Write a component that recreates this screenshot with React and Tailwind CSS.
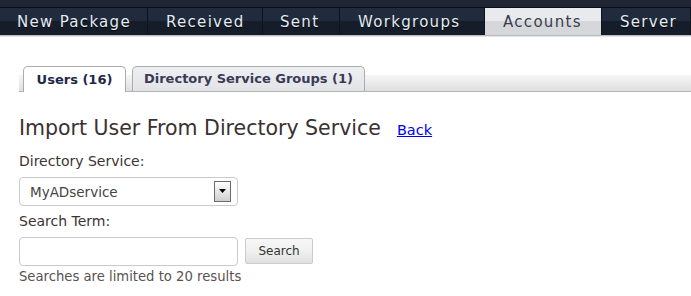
import React from "react";

const font = { fontFamily: '"DejaVu Sans", Verdana, sans-serif' };

function NavItem({ label, w, active, pl = "pl-[18px]" }) {
  return (
    <div
      className={`${w} ${pl} pt-[2px] h-full flex items-center shrink-0 border-r border-[#0e141d] ${
        active
          ? "bg-[linear-gradient(to_bottom,#e9eaed_0,#e9eaed_50%,#d6d7db_50%,#d6d7db_100%)] text-[#383e4c]"
          : "bg-[linear-gradient(to_bottom,#202b3d_0,#202b3d_48%,#151d2a_48%,#151d2a_100%)] text-[#e4ecf4] [text-shadow:0_1px_0_#000]"
      } text-[15px] tracking-[1.3px] leading-none whitespace-nowrap`}
    >
      {label}
    </div>
  );
}

export default function App() {
  return (
    <div className="w-[691px] h-[296px] bg-white overflow-hidden" style={font}>
      {/* Top nav */}
      <div className="h-[7px] bg-[#1e2535]" />
      <div className="h-[1px] bg-[#0b1017]" />
      <div className="h-[27px] flex bg-[#151d2a]">
        <NavItem label="New Package" w="w-[148px]" pl="pl-[17px]" />
        <NavItem label="Received" w="w-[115px]" />
        <NavItem label="Sent" w="w-[77px]" pl="pl-[17px]" />
        <NavItem label="Workgroups" w="w-[145px]" />
        <NavItem label="Accounts" w="w-[117px]" active />
        <NavItem label="Server" w="flex-1" />
      </div>
      <div className="h-[1px] bg-[#b9bdc3]" />
      <div className="h-[1px] bg-[#e6e6e6]" />

      <div className="pl-[19px]">
        {/* Tabs */}
        <div className="mt-[29px] h-[26px] border-b border-[#b4b4b4] bg-[linear-gradient(to_bottom,#ffffff_9px,#f6f6f6_9px,#dfdfdf_100%)] flex items-end gap-[6px] pl-[4px]">
          <div className="relative z-10 -mb-[1px] h-[26px] w-[103px] bg-white border border-b-0 border-[#ababab] rounded-t-[5px] flex items-center justify-center text-[13px] font-bold text-[#1d2847]">
            Users (16)
          </div>
          <div className="h-[25px] w-[233px] bg-[linear-gradient(to_bottom,#eeeff2,#e2e3e7)] border border-b-0 border-[#ababab] rounded-t-[5px] flex items-center justify-center text-[13px] font-bold text-[#3a3a55]">
            Directory Service Groups (1)
          </div>
        </div>

        {/* Heading */}
        <div className="mt-[24px] flex items-baseline">
          <div className="text-[20.5px] leading-[24px] text-[#3a3131]">
            Import User From Directory Service
          </div>
          <a href="#" className="ml-[16px] text-[14.5px] text-[#0000ee] underline">
            Back
          </a>
        </div>

        <div className="mt-[10px] text-[14px] leading-[18px] text-[#3b3434]">
          Directory Service:
        </div>
        <div className="mt-[7px] w-[219px] h-[29px] border border-[#cacaca] rounded-[4px] flex items-center justify-between pl-[10px] pr-[6px]">
          <span className="text-[13.5px] text-[#444] pt-[2px]">MyADservice</span>
          <div className="w-[17px] h-[21px] border border-[#6c6c6c] bg-[linear-gradient(to_bottom,#ffffff,#cfcfcf)] flex items-center justify-center">
            <svg width="7" height="4" viewBox="0 0 7 4">
              <path d="M0 0H7L3.5 4Z" fill="#000" />
            </svg>
          </div>
        </div>

        <div className="mt-[6px] text-[14px] leading-[18px] text-[#3b3434]">
          Search Term:
        </div>
        <div className="mt-[7px] flex items-center">
          <div className="w-[219px] h-[29px] border border-[#cacaca] rounded-[4px]" />
          <div className="ml-[7px] w-[68px] h-[26px] border border-[#cbcbcb] rounded-[2px] bg-[linear-gradient(to_bottom,#f7f7f7,#f0f0f0_50%,#e0e0e0)] flex items-center justify-center text-[12px] text-[#333]">
            Search
          </div>
        </div>
        <div className="mt-[3px] text-[13.2px] leading-[16px] text-[#5a5252]">
          Searches are limited to 20 results
        </div>
      </div>
    </div>
  );
}
